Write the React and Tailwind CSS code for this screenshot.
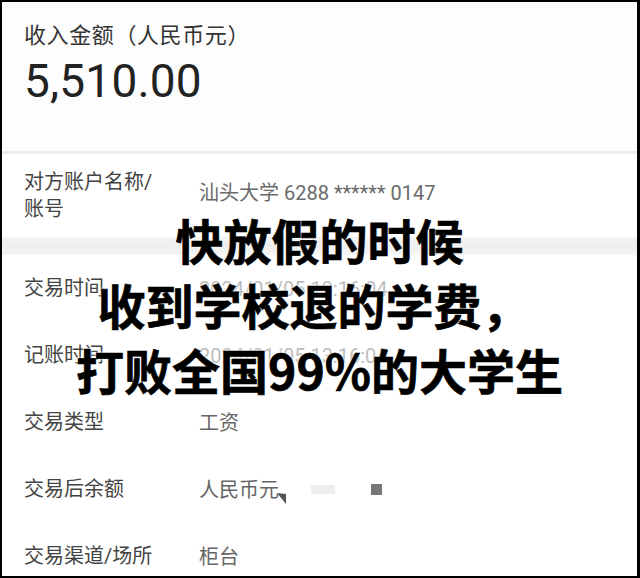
export default function App() {
  const rows = [
    { label: "交易时间", value: "2024/01/05  13:16:04", faded: true },
    { label: "记账时间", value: "2024/01/05  13:16:04", faded: true },
    { label: "交易类型", value: "工资" },
    { label: "交易后余额", value: "人民币元", balance: true },
    { label: "交易渠道/场所", value: "柜台" },
  ];

  return (
    <div className="relative w-[640px] h-[578px] overflow-hidden bg-white border-t-2 border-l-2 border-b-2 border-r-[3px] border-black font-['Roboto','Noto_Sans_CJK_SC',sans-serif]">
      {/* Amount header */}
      <div className="h-[149px] px-[22px] pt-[20px] bg-[#fdfdfd]">
        <div className="text-[22px] leading-[28px] text-[#333] tracking-[0.6px]">收入金额（人民币元）</div>
        <div className="mt-[7px] text-[46px] leading-[48px] text-[#222] tracking-[0.2px]">5,510.00</div>
      </div>
      <div className="h-[3px] bg-[#ececec]" />

      {/* Counterparty */}
      <div className="h-[83px] flex items-center pl-[22px]">
        <div className="w-[175px] text-[20px] leading-[27px] text-[#444]">
          对方账户名称/
          <br />
          账号
        </div>
        <div className="text-[20px] text-[#6a6a6a] -mt-[6px]">汕头大学 6288 ****** 0147</div>
      </div>
      <div className="h-[18px] bg-gradient-to-b from-[#f4f4f4] via-[#eeeeee] to-[#f6f6f6]" />

      {/* Detail rows */}
      {rows.map((row) => (
        <div key={row.label} className="h-[67px] flex items-center pl-[22px]">
          <div className="w-[175px] text-[20px] leading-[27px] text-[#444]">{row.label}</div>
          <div
            className={`flex items-center text-[20px] ${row.faded ? "text-[#bdbdbd]" : "text-[#666]"}`}
          >
            {row.value}
            {row.balance && (
              <>
                <span className="inline-block w-[9px] h-[11px] mt-[18px] -ml-[2px] bg-[#555] [clip-path:polygon(0_0,100%_10%,100%_100%)]" />
                <span className="inline-block w-[24px] h-[9px] ml-[25px] bg-[#eeeeee]" />
                <span className="inline-block w-[11px] h-[11px] ml-[36px] bg-[#777]" />
              </>
            )}
          </div>
        </div>
      ))}

      {/* Caption overlay */}
      <div className="absolute left-0 right-0 top-[205px] text-center text-[48px] leading-[65px] font-bold text-black font-['Noto_Sans_CJK_SC',sans-serif] [-webkit-text-stroke:0.7px_black] [text-shadow:0_0_3px_#fff,0_0_3px_#fff]">
        <div>快放假的时候</div>
        <div className="pr-[12px]">收到学校退的学费，</div>
        <div>打败全国99%的大学生</div>
      </div>
    </div>
  );
}
